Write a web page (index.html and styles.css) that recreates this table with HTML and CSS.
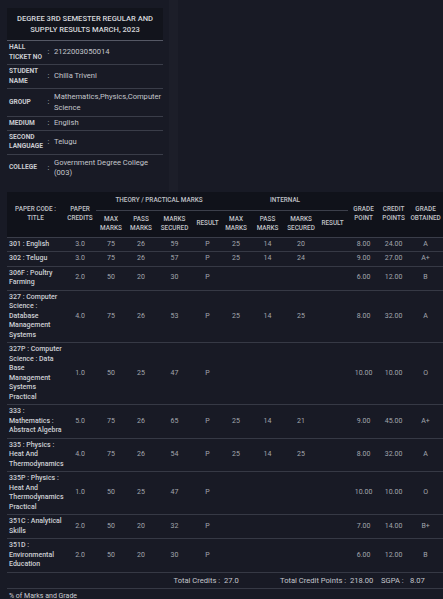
FILE: index.html
```html
<!DOCTYPE html>
<html>
<head>
<meta charset="utf-8">
<link rel="stylesheet" href="styles.css">
</head>
<body>
<div class="top">
  <div class="panel">
    <div class="title">DEGREE 3RD SEMESTER REGULAR AND SUPPLY RESULTS MARCH, 2023</div>
    <table class="info">
      <colgroup><col class="c-label"><col class="c-colon"><col></colgroup>
      <tr><th>HALL<br>TICKET NO</th><td class="colon">:</td><td>2122003050014</td></tr>
      <tr><th>STUDENT<br>NAME</th><td class="colon">:</td><td>Chilla Triveni</td></tr>
      <tr class="tall"><th>GROUP</th><td class="colon">:</td><td>Mathematics,Physics,Computer Science</td></tr>
      <tr class="short"><th>MEDIUM</th><td class="colon">:</td><td>English</td></tr>
      <tr><th>SECOND<br>LANGUAGE</th><td class="colon">:</td><td>Telugu</td></tr>
      <tr class="tall last"><th>COLLEGE</th><td class="colon">:</td><td>Government Degree College (003)</td></tr>
    </table>
  </div>
  <div class="divider"></div>
</div>
<table class="marks">
  <colgroup>
    <col style="width:57px"><col style="width:32px"><col style="width:30px"><col style="width:30px">
    <col style="width:37px"><col style="width:29px"><col style="width:28px"><col style="width:35px">
    <col style="width:32px"><col style="width:31px"><col style="width:31px"><col style="width:29px">
    <col style="width:35px">
  </colgroup>
  <thead>
    <tr class="h1">
      <th rowspan="2">PAPER CODE :<br>TITLE</th>
      <th rowspan="2">PAPER<br>CREDITS</th>
      <th colspan="4" class="grp">THEORY / PRACTICAL MARKS</th>
      <th colspan="4" class="grp">INTERNAL</th>
      <th rowspan="2">GRADE<br>POINT</th>
      <th rowspan="2">CREDIT<br>POINTS</th>
      <th rowspan="2">GRADE<br>OBTAINED</th>
    </tr>
    <tr class="h2">
      <th>MAX<br>MARKS</th><th>PASS<br>MARKS</th><th>MARKS<br>SECURED</th><th>RESULT</th>
      <th>MAX<br>MARKS</th><th>PASS<br>MARKS</th><th>MARKS<br>SECURED</th><th>RESULT</th>
    </tr>
  </thead>
  <tbody>
    <tr><td class="name">301 : English</td><td>3.0</td><td>75</td><td>26</td><td>59</td><td>P</td><td>25</td><td>14</td><td>20</td><td></td><td>8.00</td><td>24.00</td><td>A</td></tr>
    <tr><td class="name">302 : Telugu</td><td>3.0</td><td>75</td><td>26</td><td>57</td><td>P</td><td>25</td><td>14</td><td>24</td><td></td><td>9.00</td><td>27.00</td><td>A+</td></tr>
    <tr><td class="name">306F : Poultry<br>Farming</td><td>2.0</td><td>50</td><td>20</td><td>30</td><td>P</td><td></td><td></td><td></td><td></td><td>6.00</td><td>12.00</td><td>B</td></tr>
    <tr><td class="name">327 : Computer<br>Science :<br>Database<br>Management<br>Systems</td><td>4.0</td><td>75</td><td>26</td><td>53</td><td>P</td><td>25</td><td>14</td><td>25</td><td></td><td>8.00</td><td>32.00</td><td>A</td></tr>
    <tr><td class="name">327P : Computer<br>Science : Data<br>Base<br>Management<br>Systems<br>Practical</td><td>1.0</td><td>50</td><td>25</td><td>47</td><td>P</td><td></td><td></td><td></td><td></td><td>10.00</td><td>10.00</td><td>O</td></tr>
    <tr><td class="name">333 :<br>Mathematics :<br>Abstract Algebra</td><td>5.0</td><td>75</td><td>26</td><td>65</td><td>P</td><td>25</td><td>14</td><td>21</td><td></td><td>9.00</td><td>45.00</td><td>A+</td></tr>
    <tr><td class="name">335 : Physics :<br>Heat And<br>Thermodynamics</td><td>4.0</td><td>75</td><td>26</td><td>54</td><td>P</td><td>25</td><td>14</td><td>25</td><td></td><td>8.00</td><td>32.00</td><td>A</td></tr>
    <tr><td class="name">335P : Physics :<br>Heat And<br>Thermodynamics<br>Practical</td><td>1.0</td><td>50</td><td>25</td><td>47</td><td>P</td><td></td><td></td><td></td><td></td><td>10.00</td><td>10.00</td><td>O</td></tr>
    <tr><td class="name">351C : Analytical<br>Skills</td><td>2.0</td><td>50</td><td>20</td><td>32</td><td>P</td><td></td><td></td><td></td><td></td><td>7.00</td><td>14.00</td><td>B+</td></tr>
    <tr><td class="name">351D :<br>Environmental<br>Education</td><td>2.0</td><td>50</td><td>20</td><td>30</td><td>P</td><td></td><td></td><td></td><td></td><td>6.00</td><td>12.00</td><td>B</td></tr>
    <tr class="total">
      <td colspan="6" class="right">Total Credits :</td>
      <td class="left">27.0</td>
      <td colspan="3" class="right">Total Credit Points :</td>
      <td class="left">218.00</td>
      <td class="left">SGPA :</td>
      <td class="left">8.07</td>
    </tr>
    <tr class="pct"><td colspan="13" class="name">% of Marks and Grade</td></tr>
  </tbody>
</table>
</body>
</html>
```

FILE: styles.css
```css
html, body {
  margin: 0;
  padding: 0;
  overflow: hidden;
  background: #181a25;
  font-family: Roboto, "Liberation Sans", sans-serif;
  color: #c4c6cc;
}

.top {
  display: flex;
  align-items: stretch;
}

.panel {
  width: 156px;
  margin: 8px 0 10px 7px;
}

.divider {
  width: 9px;
  margin-left: 6px;
  background: #1c1e29;
}

.title {
  background: #12141c;
  color: #d6d7db;
  font-size: 7.6px;
  font-weight: 500;
  line-height: 11px;
  text-align: center;
  padding: 5px 4px 5px;
  border-bottom: 1px solid #555865;
}

.info {
  width: 100%;
  border-collapse: collapse;
  table-layout: fixed;
}

.info .c-label { width: 38px; }
.info .c-colon { width: 7px; }

.info tr {
  border-bottom: 1px solid #3a3d49;
}

.info tr.last { border-bottom: none; }

.info th {
  text-align: left;
  font-size: 6.6px;
  font-weight: 700;
  line-height: 9.5px;
  color: #c9cbd0;
  padding: 2px 0 2px 2px;
  vertical-align: middle;
}

.info td {
  font-size: 7.6px;
  line-height: 10.5px;
  color: #c4c6cc;
  padding: 2px 2px 2px 2px;
  vertical-align: middle;
}

.info tr.tall td, .info tr.tall th { padding-top: 3px; padding-bottom: 3px; }
.info tr.short td, .info tr.short th { padding-top: 1px; padding-bottom: 1px; }

.info td.colon {
  text-align: center;
  padding: 0;
}

.marks {
  margin-left: 7px;
  width: 436px;
  border-collapse: collapse;
  table-layout: fixed;
}

.marks thead {
  background: #10121a;
}

.marks th {
  font-size: 6.4px;
  font-weight: 500;
  line-height: 9px;
  color: #c0c2c8;
  text-align: center;
  vertical-align: middle;
  padding: 3px 1px;
}

.marks tr.h1 th { padding: 4px 1px 5px; }
.marks th.grp { border-bottom: 1px solid #3c3f4b; }
.marks tr.h2 th { padding: 4px 1px 4px; }

.marks thead tr.h2 { border-bottom: 1px solid #3a3d49; }

.marks tbody tr {
  border-bottom: 1px solid #363945;
}

.marks td {
  font-size: 7px;
  line-height: 9.5px;
  color: #a3a6ad;
  text-align: center;
  vertical-align: middle;
  padding: 2px 1px;
}

.marks td.name {
  text-align: left;
  padding-left: 2px;
  color: #cdcfd4;
  font-weight: 500;
}

.marks tr.total td {
  font-size: 7.6px;
  color: #c4c6cc;
  padding: 3px 2px;
}

.marks td.right { text-align: right; }
.marks td.left { text-align: left; }

.marks tr.pct td {
  padding-top: 3px;
  font-weight: 400;
}
```
